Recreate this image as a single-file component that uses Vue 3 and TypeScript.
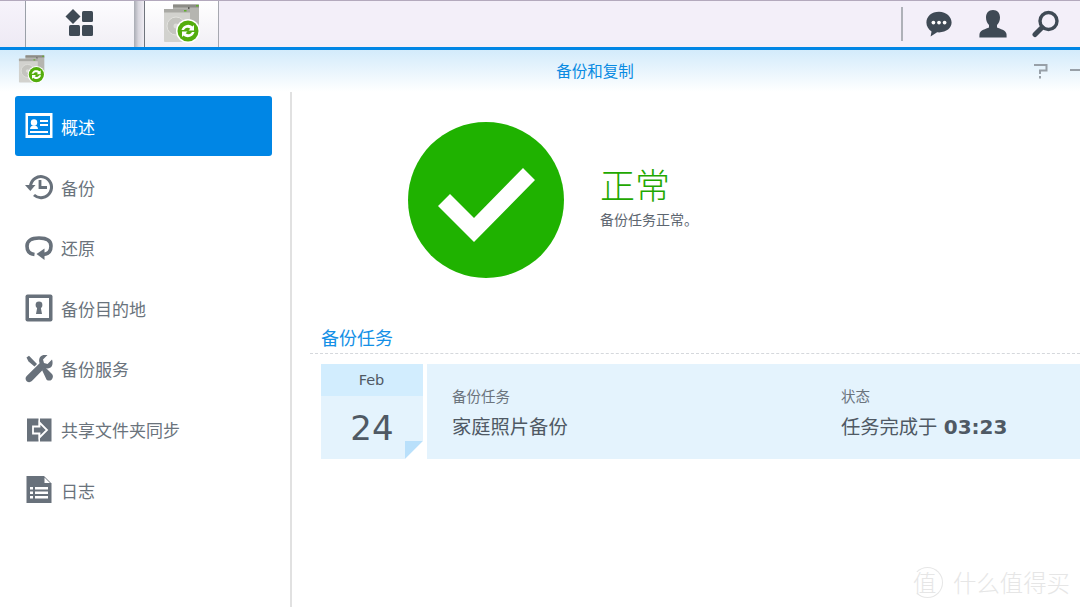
<template>
  <div class="desktop">
    <!-- Taskbar -->
    <div class="taskbar">
      <div class="task-edge"></div>
      <div class="task-home">
        <svg width="30" height="28" viewBox="0 0 30 28" fill="#3f4a55">
          <path d="M8 0 L15.500 7.500 L8 15 L0.500 7.500 Z" />
          <rect x="17" y="2" width="11" height="11" rx="1.500" />
          <rect x="4" y="16" width="11" height="11" rx="1.500" />
          <rect x="17" y="16" width="11" height="11" rx="1.500" />
        </svg>
      </div>
      <div class="task-gap"></div>
      <div class="task-app">
        <svg width="38" height="40" viewBox="0 0 38 40">
          <use href="#app-icon" />
        </svg>
      </div>
      <div class="task-spacer"></div>
      <div class="task-tools">
        <span class="task-divider"></span>
        <svg width="28" height="28" viewBox="0 0 30 30" fill="#3f4a55">
          <path d="M15 2C7 2 1.500 7 1.500 13.500c0 4 2.200 7.400 5.500 9.500L6 28.500l7-4.600c.7.100 1.300.100 2 .100 8 0 13.500-4.800 13.500-10.500S23 2 15 2z" />
          <circle cx="9" cy="13.500" r="2" fill="#fff" />
          <circle cx="15" cy="13.500" r="2" fill="#fff" />
          <circle cx="21" cy="13.500" r="2" fill="#fff" />
        </svg>
        <svg width="28" height="28" viewBox="0 0 28 28" fill="#3f4a55">
          <path d="M14 0c4.500 0 7 3 7 7.500 0 3-1.200 6-3 7.500v2.500c3 1.500 9 2.500 9.500 6.500.1 1 .1 2.500.1 3.500H.4c0-1 0-2.500.1-3.500C1 20 7 19 10 17.500V15c-1.800-1.500-3-4.500-3-7.500C7 3 9.500 0 14 0z" />
        </svg>
        <svg width="28" height="28" viewBox="0 0 28 28" fill="none" stroke="#3f4a55">
          <circle cx="16.500" cy="11" r="8.500" stroke-width="3.400" />
          <path d="M10 17.500 L3 24.500" stroke-width="5" stroke-linecap="round" />
        </svg>
      </div>
    </div>

    <!-- Window -->
    <div class="window">
      <div class="titlebar">
        <svg class="title-icon" width="28" height="29" viewBox="0 0 38 40">
          <use href="#app-icon" />
        </svg>
        <span class="title-text">备份和复制</span>
        <div class="title-actions">
          <svg width="14" height="16" viewBox="0 0 14 16" fill="none" stroke="#98a0a8" stroke-width="2">
            <path d="M0 2h12.500v5.500H6V11" />
            <path d="M6 13v2.500" />
          </svg>
          <span class="minimize"></span>
        </div>
      </div>

      <div class="body">
        <aside class="sidebar">
          <div v-for="item in navItems" :key="item.label" class="nav-item" :class="{ active: item.active }">
            <span class="nav-icon" v-html="item.icon"></span>
            <span class="nav-label">{{ item.label }}</span>
          </div>
        </aside>

        <main class="content">
          <div class="status">
            <svg width="156" height="156" viewBox="0 0 156 156">
              <circle cx="78" cy="78" r="78" fill="#1fb200" />
              <path d="M30 84 L66 120 L127 58 L115 46 L66 96 L42 72 Z" fill="#fff" />
            </svg>
            <div class="status-text">
              <p class="status-title">正常</p>
              <p class="status-desc">备份任务正常。</p>
            </div>
          </div>

          <h2 class="section-title">备份任务</h2>

          <div class="task-row">
            <div class="calendar">
              <div class="cal-month">Feb</div>
              <div class="cal-day">24</div>
              <span class="cal-fold"></span>
            </div>
            <div class="task-card">
              <div class="task-col name-col">
                <span class="task-label">备份任务</span>
                <span class="task-value">家庭照片备份</span>
              </div>
              <div class="task-col">
                <span class="task-label">状态</span>
                <span class="task-value">任务完成于 <b class="task-time">03:23</b></span>
              </div>
            </div>
          </div>
        </main>
      </div>
    </div>

    <!-- Watermark -->
    <div class="watermark">
      <span class="mark-badge">值</span>
      <span>什么值得买</span>
    </div>

    <svg width="0" height="0" class="defs">
      <defs>
        <g id="app-icon">
          <rect x="10" y="0.500" width="26" height="28" rx="1" fill="#b5b5b0" />
          <rect x="10" y="0.500" width="26" height="3" fill="#8c8c86" />
          <rect x="33" y="1" width="2.500" height="1.500" fill="#5fae2b" />
          <rect x="25" y="3" width="1.500" height="6" fill="#5d5d58" />
          <rect x="1" y="5" width="26" height="33" rx="1" fill="#d2d2ce" />
          <rect x="1" y="5" width="26" height="3.500" fill="#a9a9a4" />
          <rect x="21" y="6" width="2.500" height="1.500" fill="#5fae2b" />
          <circle cx="13" cy="22" r="9" fill="#c4c4bf" stroke="#e2e2de" />
          <circle cx="13" cy="22" r="2.500" fill="#dcdcd8" />
          <circle cx="25" cy="27" r="12" fill="#fff" />
          <circle cx="25" cy="27" r="10.500" fill="#53ad0c" />
          <path d="M18.500 26a6.800 6.800 0 0 1 11-3.500l1.500-1.500v5.500h-5.500l1.800-1.800a4 4 0 0 0-6.300 1.300zM31.500 28a6.800 6.800 0 0 1-11 3.500L19 33v-5.500h5.500l-1.800 1.800a4 4 0 0 0 6.300-1.300z" fill="#fff" />
        </g>
      </defs>
    </svg>
  </div>
</template>

<script setup lang="ts">
const navItems = [
  {
    label: '概述',
    active: true,
    icon: `<svg width="28" height="26" viewBox="0 0 28 26"><rect x="0.500" y="0" width="27" height="25" fill="#fff"/><rect x="3" y="3" width="22" height="19" fill="#0086e5"/><circle cx="9" cy="9.500" r="3.200" fill="#fff"/><path d="M5 16c0-2.500 2-3.500 4-3.500s4 1 4 3.500z" fill="#fff"/><path d="M15 7h8v2h-8zM15 11h8v2h-8zM5 18h18v2H5z" fill="#fff"/></svg>`
  },
  {
    label: '备份',
    icon: `<svg width="28" height="26" viewBox="0 0 28 26" fill="none"><path d="M5.500 12.500a10.500 10.500 0 1 1 3.500 8.500" stroke="#68717b" stroke-width="3"/><path d="M0 11h10.500l-5.200 6z" fill="#68717b"/><path d="M15 6v7.500H22" stroke="#68717b" stroke-width="2.800"/></svg>`
  },
  {
    label: '还原',
    icon: `<svg width="28" height="26" viewBox="0 0 28 26" fill="none"><path d="M9.500 19.500C5 19 2 16 2 11c0-5 4-8 12-8s12 3 12 8c0 5-3 8-7.500 8.500" stroke="#68717b" stroke-width="3.600"/><path d="M19.500 13.500v11.500l-8-6z" fill="#68717b"/></svg>`
  },
  {
    label: '备份目的地',
    icon: `<svg width="28" height="28" viewBox="0 0 28 28"><rect x="0.500" y="0.500" width="27" height="27" rx="2" fill="#68717b"/><rect x="4" y="4" width="20" height="20" fill="#fff"/><circle cx="14" cy="11" r="3.400" fill="#68717b"/><path d="M12.500 12h3l1.500 8h-6z" fill="#68717b"/></svg>`
  },
  {
    label: '备份服务',
    icon: `<svg width="28" height="28" viewBox="0 0 28 28" fill="#68717b"><path d="M27 4.500 22.500 9 19 8 18 4.500 22.500 0c-3-.8-6.500.2-7.700 2.600-1 2-.8 4-.2 5.600L1.700 21c-1.700 1.700-1.300 4 0 5.200 1.400 1.300 3.600 1.500 5.200-.1L19.600 13c2 .7 4.200.7 6-.6 2-1.500 2.500-5 1.400-7.900z"/><path d="M1.500 2.500 4 .8l8 8.200-2.500 2.500-6-5zM17 15l3-3 7 7c1.500 2 1 4-.2 5.400-1.400 1.400-3.500 1.700-5.200.3z"/></svg>`
  },
  {
    label: '共享文件夹同步',
    icon: `<svg width="28" height="24" viewBox="0 0 28 24"><path d="M2 .5h11.500v23H2zM15 .5h11.500v23H15z" fill="#68717b"/><path d="M8 8.500h6.500V4.500L22 12l-7.500 7.500v-4H8z" fill="#68717b" stroke="#fff" stroke-width="1.800"/></svg>`
  },
  {
    label: '日志',
    icon: `<svg width="28" height="28" viewBox="0 0 28 28"><path d="M1.500 0H19l7.500 7.500V27H1.500z" fill="#68717b"/><path d="M19.500 1.500l5.500 5.500h-5.500z" fill="#fff"/><path d="M5 11h3v2.500H5zM10 11h13v2.500H10zM5 15.500h3V18H5zM10 15.500h13V18H10zM5 20h3v2.500H5zM10 20h13v2.500H10z" fill="#fff"/></svg>`
  }
]
</script>

<style>
body {
  margin: 0;
  overflow: hidden;
  background: #fff;
}
</style>

<style scoped>
.desktop {
  position: relative;
  width: 1080px;
  height: 607px;
  overflow: hidden;
  display: flex;
  flex-direction: column;
  background: #fff;
  font-family: "Noto Sans CJK SC", "Noto Sans", sans-serif;
}

.defs {
  position: absolute;
}

/* Taskbar */
.taskbar {
  height: 47px;
  flex: none;
  display: flex;
  box-sizing: border-box;
  border-top: 1px solid #b3a9bd;
  background: #f3eff9;
}

.task-edge {
  width: 26px;
  flex: none;
  box-sizing: border-box;
  border-right: 1px solid #9aa0a8;
  background: linear-gradient(#f6f3fb, #eeeaf4);
}

.task-home {
  width: 108px;
  flex: none;
  display: flex;
  align-items: center;
  justify-content: center;
  padding-bottom: 2px;
  box-sizing: border-box;
  background: linear-gradient(#fdfcff, #f1eff5);
}

.task-gap {
  width: 11px;
  flex: none;
  background: linear-gradient(90deg, #a9acb4, #d8d6de 45%, #f0edf4);
  border-right: 1px solid #6f747c;
  box-sizing: border-box;
}

.task-app {
  width: 74px;
  flex: none;
  display: flex;
  align-items: center;
  justify-content: center;
  box-sizing: border-box;
  border-right: 1px solid #a6a8b0;
  background: linear-gradient(#ffffff, #f1eff5);
}

.task-spacer {
  flex: 1;
}

.task-tools {
  display: flex;
  align-items: center;
  gap: 25.5px;
  padding-right: 20px;
  padding-bottom: 1px;
}

.task-divider {
  width: 2px;
  height: 34px;
  margin-top: 1px;
  margin-right: -3.500px;
  background: #aeb1b8;
}

/* Window */
.window {
  flex: 1;
  display: flex;
  flex-direction: column;
  min-height: 0;
  border-top: 3px solid #0086e5;
}

.titlebar {
  position: relative;
  height: 42px;
  flex: none;
  display: flex;
  align-items: center;
  justify-content: center;
  background: linear-gradient(#d3ebfb, #ffffff);
}

.title-icon {
  position: absolute;
  left: 18px;
  top: 5px;
}

.title-text {
  font-size: 15.5px;
  color: #0a8be2;
  margin-left: 110px;
  margin-top: -3px;
}

.title-actions {
  position: absolute;
  right: -2px;
  top: 13px;
  display: flex;
  align-items: center;
  gap: 22px;
}

.minimize {
  width: 12px;
  height: 2px;
  margin-top: -3px;
  background: #98a0a8;
}

.body {
  flex: 1;
  display: flex;
  min-height: 0;
}

/* Sidebar */
.sidebar {
  width: 292px;
  flex: none;
  box-sizing: border-box;
  padding: 4.4px 18px 0 15px;
  border-right: 2px solid #e1e1e1;
  display: grid;
  grid-auto-rows: 60.65px;
  align-content: start;
}

.nav-item {
  display: flex;
  align-items: center;
  padding-left: 10px;
  gap: 8px;
  height: 60px;
  border-radius: 3px;
  font-size: 17px;
  color: #6a737c;
}

.nav-item.active {
  background: #0086e5;
  color: #fff;
}

.nav-icon {
  display: flex;
  width: 28px;
  justify-content: center;
}

/* Content */
.content {
  flex: 1;
  min-width: 0;
  padding: 30px 0 0 18px;
}

.status {
  display: flex;
  align-items: center;
  gap: 36px;
  padding-left: 98px;
  height: 156px;
}

.status-title {
  margin: -10px 0 3px;
  font-size: 35px;
  font-weight: 300;
  line-height: 44px;
  color: #1fa800;
}

.status-desc {
  margin: 0;
  font-size: 14px;
  line-height: 20px;
  color: #5d6670;
}

.section-title {
  margin: 46px 0 0;
  padding: 0 0 3px 11px;
  font-size: 18px;
  font-weight: 400;
  line-height: 26px;
  color: #1490e6;
  border-bottom: 1px dashed #d5d8dc;
}

.task-row {
  display: flex;
  gap: 4px;
  margin: 10px 0 0 11px;
  height: 95px;
}

.calendar {
  position: relative;
  width: 102px;
  flex: none;
  background: #e4f3fd;
  display: flex;
  flex-direction: column;
  align-items: center;
  color: #4f5964;
  font-family: "DejaVu Sans", sans-serif;
  clip-path: polygon(0 0, 100% 0, 100% 77px, 84px 100%, 0 100%);
}

.cal-month {
  width: 100%;
  height: 32px;
  line-height: 32px;
  text-align: center;
  font-size: 14.5px;
  padding-right: 1px;
  box-sizing: border-box;
  background: #d2edfe;
}

.cal-day {
  font-size: 34px;
  line-height: 65px;
}

.cal-fold {
  position: absolute;
  right: 0;
  bottom: 0;
  width: 18px;
  height: 18px;
  background: #b9e0fb;
  clip-path: polygon(100% 0, 0 0, 0 100%);
}

.task-card {
  flex: 1;
  display: flex;
  background: #e4f3fd;
  padding-left: 25px;
}

.task-col {
  display: flex;
  flex-direction: column;
  padding-top: 21px;
}

.name-col {
  width: 389px;
}

.task-label {
  font-size: 14.5px;
  line-height: 22px;
  color: #6b747d;
}

.task-value {
  font-size: 19.3px;
  line-height: 38px;
  color: #4f5964;
}

.task-time {
  margin-left: 2px;
  font-family: "DejaVu Sans", sans-serif;
  font-size: 20px;
  font-weight: 700;
}

/* Watermark */
.watermark {
  position: absolute;
  right: 10px;
  bottom: 9px;
  display: flex;
  align-items: center;
  gap: 10px;
  font-size: 23.4px;
  line-height: 31px;
  font-weight: 300;
  color: #e6e6e6;
}

.mark-badge {
  width: 31px;
  height: 31px;
  box-sizing: border-box;
  border: 1px solid #e6e6e6;
  border-left-color: transparent;
  border-radius: 50%;
  line-height: 29px;
}
</style>
